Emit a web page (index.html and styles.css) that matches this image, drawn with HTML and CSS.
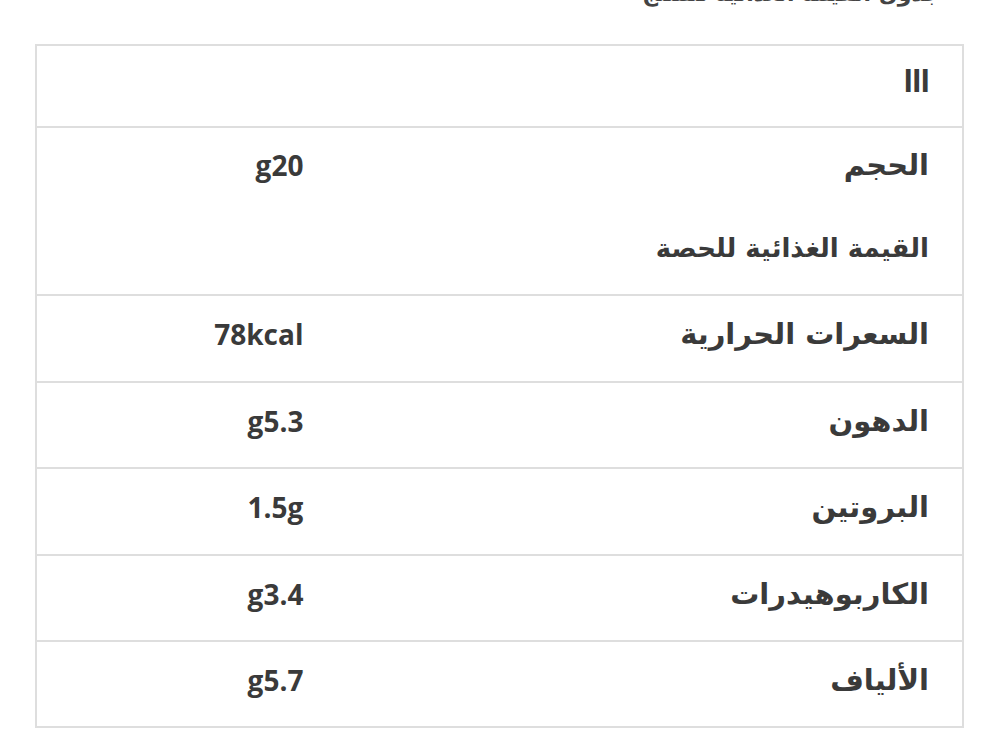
FILE: index.html
```html
<!DOCTYPE html>
<html lang="ar" dir="rtl">
<head>
<meta charset="utf-8">
<title>القيمة الغذائية</title>
<link rel="stylesheet" href="styles.css">
</head>
<body>
<div class="page">
  <p class="intro">جدول القيمة الغذائية للمنتج</p>
  <table class="nutrition">
    <colgroup><col class="col-label"><col class="col-value"></colgroup>
    <tr class="row head"><td colspan="2"><span class="bars">lll</span></td></tr>
    <tr class="row first"><td class="label">الحجم</td><td class="value">g20</td></tr>
    <tr class="row sub"><td class="label small" colspan="2">القيمة الغذائية للحصة</td></tr>
    <tr class="row"><td class="label">السعرات الحرارية</td><td class="value">78kcal</td></tr>
    <tr class="row"><td class="label">الدهون</td><td class="value">g5.3</td></tr>
    <tr class="row"><td class="label">البروتين</td><td class="value">1.5g</td></tr>
    <tr class="row"><td class="label">الكاربوهيدرات</td><td class="value">g3.4</td></tr>
    <tr class="row last"><td class="label">الألياف</td><td class="value">g5.7</td></tr>
  </table>
</div>
</body>
</html>
```

FILE: styles.css
```css
html, body {
  margin: 0;
  padding: 0;
  background: #ffffff;
}
body {
  font-family: "DejaVu Sans", "Open Sans", sans-serif;
  color: #3a3a3a;
  overflow: hidden;
}
.page {
  padding: 0 36px 0 35px;
}
.intro {
  margin: -20px 24px 0 0;
  height: 28px;
  font-size: 22px;
  line-height: 28px;
  font-weight: bold;
  color: #444;
}
.nutrition {
  margin-top: 36px;
  width: 929px;
  border-collapse: collapse;
  border: 2px solid #dedede;
}
.col-label { width: 624px; }
.col-value { width: 305px; }
.row td {
  height: 86.5px;
  box-sizing: border-box;
  padding: 20px 33px 28px 36px;
  vertical-align: top;
  line-height: 36px;
}
.row.head td {
  height: 82px;
  padding-top: 16px;
  padding-bottom: 25px;
  font-family: "Open Sans", sans-serif;
  font-size: 31px;
  line-height: 36px;
}
.row.first td,
.row.sub td {
  height: 81px;
  padding-top: 19px;
}
.row.last td {
  height: 82px;
}
.row + .row td {
  border-top: 2px solid #dedede;
}
.row.sub td {
  border-top: none;
}
.label {
  font-family: "DejaVu Sans", sans-serif;
  font-weight: bold;
  font-size: 29px;
  text-align: right;
}
.label.small {
  font-size: 26px;
}
.row td.value {
  font-family: "Open Sans", "Noto Sans", sans-serif;
  font-weight: bold;
  font-size: 28px;
  text-align: right;
  padding-right: 37px;
}
.bars {
  font-weight: bold;
  letter-spacing: -1px;
  color: #3a3a3a;
}
```
